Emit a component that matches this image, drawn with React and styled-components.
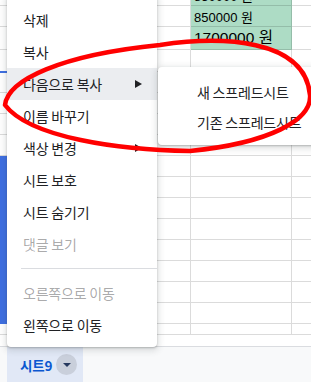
import React from 'react';
import styled, { createGlobalStyle } from 'styled-components';

// Page reset
const GlobalStyle = createGlobalStyle`
  html, body {
    margin: 0;
    padding: 0;
    background: #fff;
    overflow: hidden;
  }
`;

const KR = `"Noto Sans CJK KR", "Noto Sans", sans-serif`;
const GRID_LINE = 'rgba(0, 0, 0, 0.14)';
const SEL_BLUE = '#3e6fe2';
const GREEN = '#addcc5';

// Whole window
const Screen = styled.div`
  position: relative;
  width: 311px;
  height: 382px;
  overflow: hidden;
  display: flex;
  flex-direction: column;
  font-family: ${KR};
`;

// Sheet area with the cell grid
const SheetArea = styled.div`
  height: 346px;
  overflow: hidden;
  background: #fff;
  border-bottom: 1px solid #dadce0;
`;

const Grid = styled.div`
  display: flex;
  flex-direction: column;
  margin-top: -15px;
`;

const Row = styled.div`
  display: flex;
  height: ${p => p.$h}px;
`;

const Cell = styled.div`
  box-sizing: border-box;
  flex: ${p => (p.$w ? `0 0 ${p.$w}px` : '1')};
  border-bottom: 1px solid ${p => p.$lineColor || GRID_LINE};
  border-right: ${p => (p.$w ? `1px solid ${GRID_LINE}` : 'none')};
  background: ${p => p.$bg || 'transparent'};
  box-shadow: ${p => (p.$topMark ? `inset 0 1px 0 ${SEL_BLUE}` : 'none')};
  display: flex;
  align-items: flex-end;
  padding: 0 3px ${p => p.$pb || 1}px;
  font-family: "Liberation Sans", ${KR};
  font-size: ${p => p.$size || 13}px;
  line-height: ${p => (p.$size ? Math.round(p.$size * 1.16) : 15)}px;
  color: #000;
  white-space: nowrap;
  overflow: hidden;
`;

// Bottom tab strip
const TabBar = styled.div`
  flex: 1;
  background: #f8f9fa;
  display: flex;
  padding-left: 7px;
`;

const SheetTab = styled.div`
  display: flex;
  align-items: center;
  gap: 4px;
  padding: 0 6px 0 13px;
  background: #e1e8f6;
  color: #0b57d0;
  font-size: 13.5px;
  font-weight: 700;
  letter-spacing: -0.2px;
`;

const TabToggle = styled.div`
  width: 21px;
  height: 21px;
  border-radius: 50%;
  background: #c9cfdb;
  display: flex;
  align-items: center;
  justify-content: center;

  &::after {
    content: '';
    border-top: 4px solid #26395f;
    border-left: 4px solid transparent;
    border-right: 4px solid transparent;
    margin-top: 1px;
  }
`;

// Context menu floating over the sheet
const Menu = styled.div`
  position: absolute;
  left: 7px;
  top: -4px;
  width: 150px;
  padding: 8px 0 6px;
  background: #fff;
  border-radius: 0 0 4px 4px;
  box-shadow: 0 2px 6px 2px rgba(60, 64, 67, 0.15), 0 1px 2px rgba(60, 64, 67, 0.3);
  z-index: 2;
`;

const MenuItem = styled.div`
  height: 32px;
  display: flex;
  align-items: center;
  justify-content: space-between;
  padding: 0 15px 0 16px;
  font-size: 14px;
  letter-spacing: -0.2px;
  color: ${p => (p.$disabled ? 'rgba(32, 33, 36, 0.4)' : '#202124')};
  background: ${p => (p.$active ? '#ebedf0' : 'transparent')};
  white-space: nowrap;
`;

const SubArrow = styled.span`
  width: 0;
  height: 0;
  border-left: 7px solid #202124;
  border-top: 4px solid transparent;
  border-bottom: 4px solid transparent;
`;

const Separator = styled.div`
  height: 1px;
  margin: 8px 0 8px 14px;
  background: #dadce0;
`;

const SubMenu = styled.div`
  position: absolute;
  left: 158px;
  top: 67px;
  width: 170px;
  padding: 10px 0 8px;
  background: #fff;
  border-radius: 4px;
  box-shadow: 0 2px 6px 2px rgba(60, 64, 67, 0.15), 0 1px 2px rgba(60, 64, 67, 0.3);
  z-index: 3;
`;

const SubItem = styled.div`
  height: 30px;
  display: flex;
  align-items: center;
  padding-left: 39px;
  font-size: 14px;
  letter-spacing: -0.2px;
  color: #202124;
  white-space: nowrap;
`;

// Hand-drawn red ring on top of everything
const Annotation = styled.svg`
  position: absolute;
  left: 0;
  top: 0;
  pointer-events: none;
  z-index: 5;
`;

const rows = [
  { h: 21, b: '850000 원', green: true },
  { h: 21, b: '850000 원', green: true },
  { h: 23, b: '1700000 원', green: true, size: 15.5, pb: 2 },
  { h: 22, stripLine: SEL_BLUE },
  { h: 21, stripTop: true },
  { h: 21 },
  { h: 21 },
  { h: 21 },
  ...Array.from({ length: 8 }, () => ({ h: 21, stripFill: true })),
  { h: 11 },
];

const menuItems = [
  { label: '삭제' },
  { label: '복사' },
  { label: '다음으로 복사', sub: true, active: true },
  { label: '이름 바꾸기' },
  { label: '색상 변경', sub: true },
  { label: '시트 보호' },
  { label: '시트 숨기기' },
  { label: '댓글 보기', disabled: true },
  { divider: true },
  { label: '오른쪽으로 이동', disabled: true },
  { label: '왼쪽으로 이동' },
];

const App = () => {
  return (
    <>
      <GlobalStyle />
      <Screen>
        <SheetArea>
          <Grid>
            {rows.map((r, i) => (
              <Row key={i} $h={r.h}>
                <Cell
                  $w={8}
                  $bg={r.stripFill ? SEL_BLUE : undefined}
                  $lineColor={r.stripFill ? SEL_BLUE : r.stripLine}
                  $topMark={r.stripTop}
                />
                <Cell $w={183} />
                <Cell $w={101} $bg={r.green ? GREEN : undefined} $size={r.size} $pb={r.pb}>
                  {r.b}
                </Cell>
                <Cell />
              </Row>
            ))}
          </Grid>
        </SheetArea>

        <TabBar>
          <SheetTab>
            시트9
            <TabToggle />
          </SheetTab>
        </TabBar>

        <Menu>
          {menuItems.map((m, i) =>
            m.divider ? (
              <Separator key={i} />
            ) : (
              <MenuItem key={i} $active={m.active} $disabled={m.disabled}>
                {m.label}
                {m.sub && <SubArrow />}
              </MenuItem>
            )
          )}
        </Menu>

        <SubMenu>
          <SubItem>새 스프레드시트</SubItem>
          <SubItem>기존 스프레드시트</SubItem>
        </SubMenu>

        <Annotation width="311" height="382" viewBox="0 0 311 382">
          <path
            d="M 5 105 C 8 80, 60 55, 160 45 C 220 36, 305 38, 310 95 C 312 120, 270 143, 190 151 C 120 150, 30 138, 5 105 Z"
            fill="none"
            stroke="#f00"
            strokeWidth="4.5"
            strokeLinejoin="round"
          />
        </Annotation>
      </Screen>
    </>
  );
};

export default App;
